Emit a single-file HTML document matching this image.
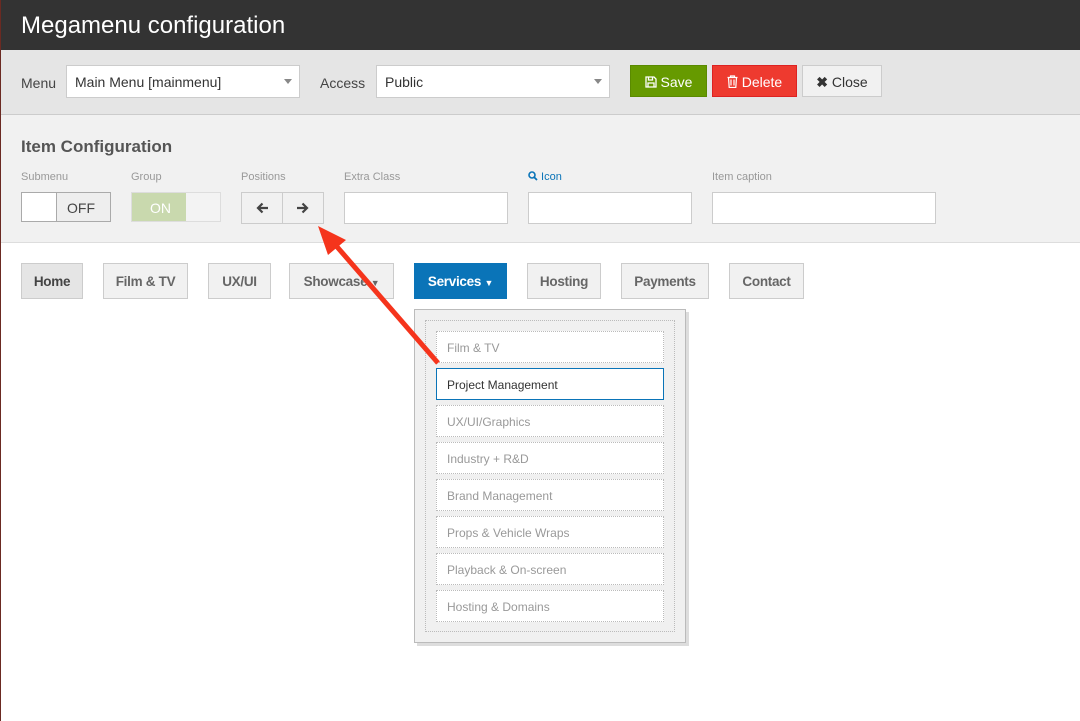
<!DOCTYPE html>
<html><head><meta charset="utf-8"><style>
*{box-sizing:border-box;margin:0;padding:0}
body{width:1080px;height:721px;overflow:hidden;background:#fff;font-family:"Liberation Sans",Helvetica,Arial,sans-serif;position:relative}
.abs{position:absolute}
.hdr{left:0;top:0;width:1080px;height:50px;background:#333;color:#fff;font-size:24px;padding:12px 0 0 21px}
.tb{left:0;top:50px;width:1080px;height:65px;background:#e5e5e5;border-bottom:1px solid #ccc}
.lbl{font-size:14px;color:#444}
.sel{background:#fff;border:1px solid #ccc;height:33px;font-size:14px;color:#333;padding:8px 8px}
.caret{position:absolute;right:7px;top:13px;border-left:4px solid transparent;border-right:4px solid transparent;border-top:5px solid #888}
.btn{height:32px;font-size:14px;padding:8px 0;text-align:center;border:1px solid}
.cfg{left:0;top:115px;width:1080px;height:128px;background:#f1f1f1;border-bottom:1px solid #ddd}
.sm{font-size:11px;color:#999}
.inp{background:#fff;border:1px solid #ccc;height:32px}
.nav{top:263px;height:36px;background:#f1f1f1;border:1px solid #ccc;font-size:13.5px;font-weight:bold;color:#666;padding:10px 0;text-align:center;letter-spacing:-0.3px;white-space:nowrap}
.it{left:436px;width:228px;height:32px;border:1px dotted #bbb;font-size:12px;color:#999;padding:9px 10px;background:#fff}
</style></head><body>
<div class="abs hdr">Megamenu configuration</div>
<div class="abs tb"></div>
<div class="abs lbl" style="left:21px;top:75px">Menu</div>
<div class="abs sel" style="left:66px;top:65px;width:234px">Main Menu [mainmenu]<span class="caret"></span></div>
<div class="abs lbl" style="left:320px;top:75px">Access</div>
<div class="abs sel" style="left:376px;top:65px;width:234px">Public<span class="caret"></span></div>
<div class="abs btn" style="left:630px;top:65px;width:77px;background:#669a00;border-color:#5a8a00;color:#fff"><svg width="12" height="12" viewBox="0 0 12 12" style="vertical-align:-1px"><path d="M1 1h8l2 2v8H1z M3.5 1v3h4V1 M3 11V7h6v4" fill="none" stroke="#fff" stroke-width="1.3"/></svg> Save</div>
<div class="abs btn" style="left:712px;top:65px;width:85px;background:#ee3a2f;border-color:#d22;color:#fff"><svg width="11" height="13" viewBox="0 0 11 13" style="vertical-align:-1px"><path d="M0.5 2.5h10 M3.5 2.5V1h4v1.5 M1.5 2.5l.7 10h6.6l.7-10 M4 4.5v6 M7 4.5v6" fill="none" stroke="#fff" stroke-width="1.2"/></svg> Delete</div>
<div class="abs btn" style="left:802px;top:65px;width:80px;background:#f1f1f1;border-color:#ccc;color:#333"><b>&#10006;</b> Close</div>
<div class="abs cfg"></div>
<div class="abs" style="left:21px;top:137px;font-size:17px;font-weight:bold;color:#555">Item Configuration</div>
<div class="abs sm" style="left:21px;top:171px">Submenu</div>
<div class="abs sm" style="left:131px;top:171px">Group</div>
<div class="abs sm" style="left:241px;top:171px">Positions</div>
<div class="abs sm" style="left:344px;top:171px">Extra Class</div>
<div class="abs sm" style="left:528px;top:171px;color:#0a74b8"><svg width="10" height="10" viewBox="0 0 10 10" style="vertical-align:-1px"><circle cx="4" cy="4" r="3" fill="none" stroke="#0a74b8" stroke-width="1.6"/><path d="M6.2 6.2L9 9" stroke="#0a74b8" stroke-width="1.8"/></svg> Icon</div>
<div class="abs sm" style="left:712px;top:171px">Item caption</div>
<div class="abs" style="left:21px;top:192px;width:90px;height:30px;border:1px solid #aaa;background:#fff"><div style="position:absolute;left:34px;top:0;width:54px;height:28px;background:#eee;border-left:1px solid #aaa;font-size:14px;color:#444;padding:7px 0 0 10px">OFF</div></div>
<div class="abs" style="left:131px;top:192px;width:90px;height:30px;border:1px solid #ddd;background:#f3f3f3"><div style="position:absolute;left:0;top:0;width:54px;height:28px;background:#c9d9ae;font-size:14px;color:#fff;padding:7px 0 0 18px">ON</div></div>
<div class="abs" style="left:241px;top:192px;width:83px;height:32px;border:1px solid #ccc;background:#f1f1f1">
<svg class="abs" style="left:14px;top:9px" width="13" height="12" viewBox="0 0 13 12"><path d="M12 6H2 M6.5 1.5L2 6l4.5 4.5" fill="none" stroke="#444" stroke-width="2.2"/></svg>
<div style="position:absolute;left:40px;top:0;height:30px;border-left:1px solid #ccc"></div>
<svg class="abs" style="left:54px;top:9px" width="13" height="12" viewBox="0 0 13 12"><path d="M1 6h10 M6.5 1.5L11 6l-4.5 4.5" fill="none" stroke="#444" stroke-width="2.2"/></svg></div>
<div class="abs inp" style="left:344px;top:192px;width:164px"></div>
<div class="abs inp" style="left:528px;top:192px;width:164px"></div>
<div class="abs inp" style="left:712px;top:192px;width:224px"></div>

<div class="abs nav" style="left:21px;width:62px;background:#e5e5e5;color:#444">Home</div>
<div class="abs nav" style="left:103px;width:85px">Film &amp; TV</div>
<div class="abs nav" style="left:208px;width:63px">UX/UI</div>
<div class="abs nav" style="left:289px;width:105px">Showcase <span style="font-size:9px">&#9660;</span></div>
<div class="abs nav" style="left:414px;width:93px;background:#0a74b8;border-color:#0a74b8;color:#fff">Services <span style="font-size:9px">&#9660;</span></div>
<div class="abs nav" style="left:527px;width:74px">Hosting</div>
<div class="abs nav" style="left:621px;width:88px">Payments</div>
<div class="abs nav" style="left:729px;width:75px">Contact</div>

<div class="abs" style="left:417px;top:312px;width:272px;height:334px;background:#ddd"></div>
<div class="abs" style="left:414px;top:309px;width:272px;height:334px;background:#f0f0f0;border:1px solid #bbb"></div>
<div class="abs" style="left:425px;top:320px;width:250px;height:312px;border:1px dotted #bbb"></div>
<div class="abs it" style="top:331px">Film &amp; TV</div>
<div class="abs it" style="top:368px;border:1px solid #0a74b8;color:#333">Project Management</div>
<div class="abs it" style="top:405px">UX/UI/Graphics</div>
<div class="abs it" style="top:442px">Industry + R&amp;D</div>
<div class="abs it" style="top:479px">Brand Management</div>
<div class="abs it" style="top:516px">Props &amp; Vehicle Wraps</div>
<div class="abs it" style="top:553px">Playback &amp; On-screen</div>
<div class="abs it" style="top:590px">Hosting &amp; Domains</div>

<svg class="abs" style="left:0;top:0" width="1080" height="721">
<line x1="438" y1="363" x2="332" y2="241" stroke="#f5341c" stroke-width="5"/>
<polygon points="318,226 346,240 328,255" fill="#f5341c"/>
</svg>
<div class="abs" style="left:0;top:0;width:1px;height:721px;background:#6b2a22"></div>
</body></html>
